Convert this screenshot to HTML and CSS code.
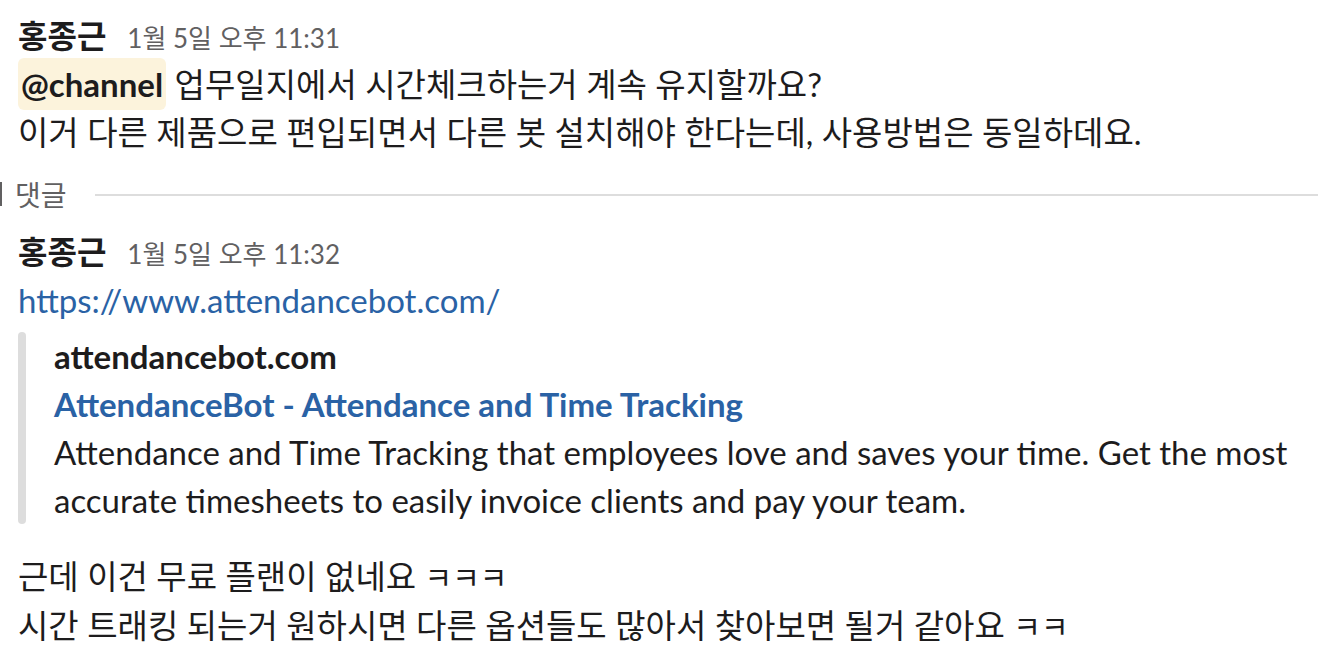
FILE: index.html
```html
<!DOCTYPE html>
<html lang="ko">
<head>
<meta charset="utf-8">
<link rel="stylesheet" href="styles.css">
</head>
<body>
<div class="feed">
  <div class="msg">
    <div class="head"><span class="name">홍종근</span><span class="time">1월 5일 오후 11:31</span></div>
    <div class="text"><span class="mention">@channel</span> 업무일지에서 시간체크하는거 계속 유지할까요?</div>
    <div class="text">이거 다른 제품으로 편입되면서 다른 봇 설치해야 한다는데, 사용방법은 동일하데요.</div>
  </div>
  <div class="divider"><span class="tick"></span><span class="dlabel">댓글</span><span class="dline"></span></div>
  <div class="msg second">
    <div class="head"><span class="name">홍종근</span><span class="time">1월 5일 오후 11:32</span></div>
    <div class="text"><a class="link" href="#">https://www.attendancebot.com/</a></div>
    <div class="attach">
      <div class="abar"></div>
      <div class="abody">
        <div class="site">attendancebot.com</div>
        <div class="atitle">AttendanceBot - Attendance and Time Tracking</div>
        <div class="adesc">Attendance and Time Tracking that employees love and saves your time. Get the most accurate timesheets to easily invoice clients and pay your team.</div>
      </div>
    </div>
    <div class="text">근데 이건 무료 플랜이 없네요 <span class="kk">ㅋㅋㅋ</span></div>
    <div class="text">시간 트래킹 되는거 원하시면 다른 옵션들도 많아서 찾아보면 될거 같아요 <span class="kk">ㅋㅋ</span></div>
  </div>
</div>
</body>
</html>
```

FILE: styles.css
```css
html, body {
  margin: 0;
  padding: 0;
  background: #fff;
}
body {
  font-family: Lato, "Noto Sans CJK KR", sans-serif;
  color: #1d1c1d;
  width: 1318px;
  height: 662px;
  overflow: hidden;
}
.feed {
  padding-top: 12px;
}
.msg {
  padding-left: 18px;
}
.head {
  display: flex;
  align-items: baseline;
  gap: 21px;
  height: 48px;
  line-height: 48px;
}
.name {
  font-weight: 700;
  font-size: 32px;
}
.time {
  font-size: 26px;
  color: #616061;
}
.text {
  font-size: 33px;
  line-height: 48px;
  white-space: nowrap;
}
.kk {
  font-size: 30px;
}
.mention {
  background: #fcf3dc;
  border-radius: 6px;
  padding: 6px 3px;
  font-weight: 700;
  color: #1d1c1d;
}
.divider {
  display: flex;
  align-items: center;
  margin-top: 14px;
  height: 48px;
}
.tick {
  width: 2px;
  height: 24px;
  background: #616061;
  margin-right: 13px;
}
.dlabel {
  font-size: 28px;
  color: #616061;
  margin-right: 28px;
}
.dline {
  flex: 1;
  height: 2px;
  background: #dddddd;
  margin-top: 1px;
}
.second {
  margin-top: 10px;
}
.link {
  color: #2a62a5;
  text-decoration: none;
}
.attach {
  display: flex;
  margin-top: 8px;
  margin-bottom: 28px;
}
.abar {
  width: 8px;
  border-radius: 4px;
  background: #dddddd;
  flex: none;
}
.abody {
  flex: 1;
  padding-left: 28px;
  padding-right: 20px;
  font-size: 33px;
  line-height: 48px;
}
.site {
  font-weight: 700;
}
.atitle {
  font-weight: 700;
  color: #2a62a5;
}
.adesc {
  white-space: normal;
}
```
